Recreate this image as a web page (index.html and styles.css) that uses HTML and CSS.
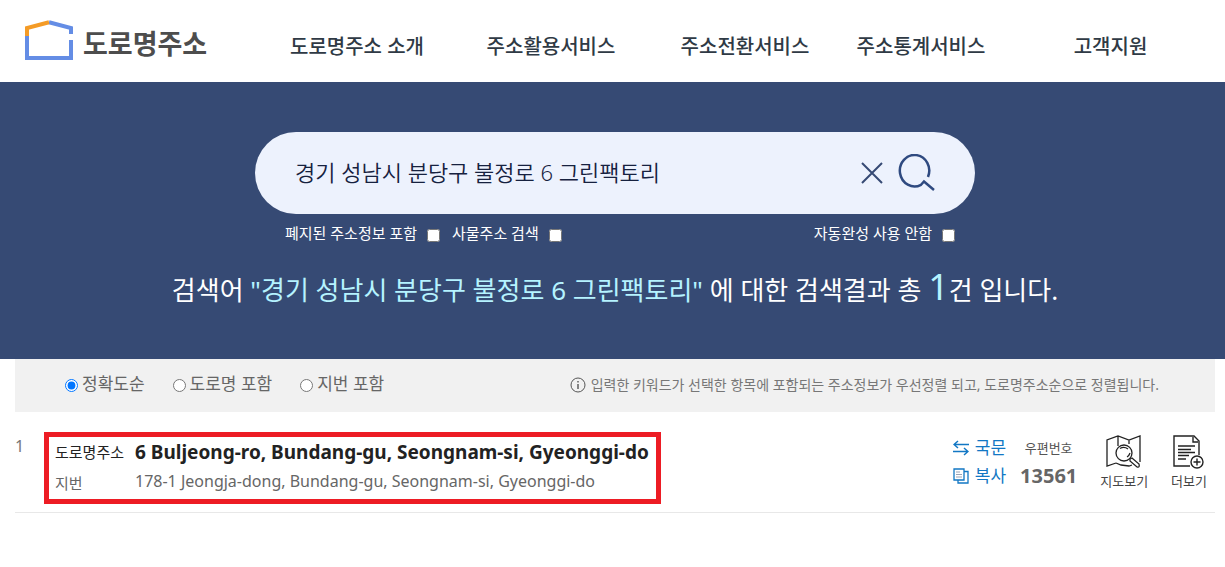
FILE: index.html
```html
<!DOCTYPE html>
<html lang="ko">
<head>
    <meta charset="UTF-8">
    <meta name="viewport" content="width=device-width, initial-scale=1.0">
    <title>도로명주소</title>
    <link rel="stylesheet" href="styles.css">
</head>
<body>

    <header class="header">
        <a class="logo" href="#">
            <svg width="48" height="42" viewBox="0 0 48 42" fill="none" stroke-width="4">
                <path d="M2 16V38H46V20" stroke="#648de5"/>
                <path d="M24 2.2L46 8V14" stroke="#648de5"/>
                <path d="M2 16V8L24 2.2" stroke="#f49b26"/>
            </svg>
            <span>도로명주소</span>
        </a>
        <nav class="menu">
            <a href="#">도로명주소 소개</a>
            <a href="#">주소활용서비스</a>
            <a href="#">주소전환서비스</a>
            <a href="#">주소통계서비스</a>
            <a href="#">고객지원</a>
        </nav>
    </header>

    <section class="search">
        <form class="search-form">
            <div class="search-box">
                <input type="text" class="keyword" aria-label="검색어" value="경기 성남시 분당구 불정로 6 그린팩토리">
                <button type="button" class="icon-btn" aria-label="지우기">
                    <svg width="22" height="22" viewBox="0 0 22 22" fill="none" stroke="#364a74" stroke-width="2">
                        <path d="M1 1L21 21M21 1L1 21"/>
                    </svg>
                </button>
                <button type="button" class="icon-btn" aria-label="검색">
                    <svg width="38" height="38" viewBox="0 0 38 38" fill="none" stroke="#2f4a80" stroke-width="2.5">
                        <path d="M31 23A14.7 15.7 0 1 0 24 30.8L27 27.500L37 36"/>
                    </svg>
                </button>
            </div>
            <div class="options">
                <label>폐지된 주소정보 포함 <input type="checkbox"></label>
                <label>사물주소 검색 <input type="checkbox"></label>
                <label class="auto">자동완성 사용 안함 <input type="checkbox"></label>
            </div>
        </form>
        <p class="summary">검색어 <span class="word">"경기 성남시 분당구 불정로 6 그린팩토리"</span> 에 대한 검색결과 총 <span class="count">1</span>건 입니다.</p>
    </section>

    <main class="content">
        <div class="sort">
            <label><input type="radio" name="sort" checked>정확도순</label>
            <label><input type="radio" name="sort">도로명 포함</label>
            <label><input type="radio" name="sort">지번 포함</label>
            <p class="notice">
                <svg width="16" height="16" viewBox="0 0 16 16" fill="none" stroke="#555">
                    <circle cx="8" cy="8" r="7"/>
                    <path d="M8 4V5.500M8 7V12" stroke-width="1.400"/>
                </svg>
                입력한 키워드가 선택한 항목에 포함되는 주소정보가 우선정렬 되고, 도로명주소순으로 정렬됩니다.
            </p>
        </div>

        <div class="result">
            <span class="num">1</span>
            <dl class="address">
                <dt>도로명주소</dt>
                <dd class="road">6 Buljeong-ro, Bundang-gu, Seongnam-si, Gyeonggi-do</dd>
                <dt class="sub">지번</dt>
                <dd class="sub jibun">178-1 Jeongja-dong, Bundang-gu, Seongnam-si, Gyeonggi-do</dd>
            </dl>
            <div class="links">
                <button type="button">
                    <svg width="16" height="16" viewBox="0 0 16 16" fill="none" stroke="#1277c4" stroke-width="1.500">
                        <path d="M16 4.500H1M5 1L1 4.500L5 8M0 11.500H15M11 8L15 11.500L11 15"/>
                    </svg>
                    국문
                </button>
                <button type="button">
                    <svg width="16" height="16" viewBox="0 0 16 16" fill="none" stroke="#1277c4" stroke-width="1.300">
                        <path d="M1 1H11V12H1ZM11 3.500H15V15H5V12"/>
                        <path d="M3 4H7M3 6.500H9M3 9H9" stroke="#9aa3b5" stroke-width="1"/>
                    </svg>
                    복사
                </button>
            </div>
            <div class="zip">
                <span>우편번호</span>
                <strong>13561</strong>
            </div>
            <button type="button" class="tool">
                <svg width="36" height="34" viewBox="0 0 36 34" fill="none" stroke="#222" stroke-width="1.300">
                    <path d="M10 28L1 31V5L12 1L23 5L34 1V27M23 5V9M12 1V11M10 28L15 30L23 31L26 30"/>
                    <circle cx="18" cy="18" r="8"/>
                    <path d="M14 13.500Q18 11 22 14M24 18Q23 21 21 22"/>
                    <path d="M24 24L26 23L33 29Q34 33 31 32L24 26Z"/>
                </svg>
                지도보기
            </button>
            <button type="button" class="tool">
                <svg width="32" height="34" viewBox="0 0 32 34" fill="none" stroke="#222" stroke-width="1.400">
                    <path d="M17 31H1V1H21L26 6V20M20 2V7H25"/>
                    <path d="M5 11H22M5 14.500H18M5 17.500H22M5 20.500H16M5 24H13"/>
                    <circle cx="24" cy="27" r="6"/>
                    <path d="M20.500 27H27.500M24 23.500V30.500"/>
                </svg>
                더보기
            </button>
        </div>
    </main>

</body>
</html>
```
FILE: styles.css
```css
* {
    box-sizing: border-box;
}
body {
    margin: 0;
    font-family: "Noto Sans", "Noto Sans CJK KR", sans-serif;
    background: #fff;
    color: #222;
}
p, dl, dd {
    margin: 0;
}
a {
    color: inherit;
    text-decoration: none;
}
button {
    padding: 0;
    border: none;
    background: none;
    font-family: inherit;
    cursor: pointer;
}
svg {
    flex-shrink: 0;
}
.header {
    display: flex;
    align-items: center;
    height: 82px;
}
.logo {
    display: flex;
    align-items: center;
    gap: 10px;
    width: 260px;
    padding-left: 25px;
    color: #4d4d4d;
    font-size: 27px;
    font-weight: bold;
    line-height: 40px;
}
.logo span {
    padding-top: 5px;
}
.menu {
    flex: 1;
    display: grid;
    grid-template-columns: 194fr 194fr 194fr 158fr 221fr;
    padding: 12px 4px 0 0;
    color: #2f3a45;
    font-size: 20px;
    font-weight: 500;
    line-height: 30px;
    text-align: center;
    white-space: nowrap;
}
.search {
    padding: 50px 5px 44px 10px;
    background: #364a74;
    color: #fff;
}
.search-form {
    max-width: 720px;
    margin: 0 auto;
}
.search-box {
    display: flex;
    align-items: center;
    gap: 14px;
    height: 82px;
    padding: 0 40px;
    border-radius: 41px;
    background: #edf2fd;
}
.keyword {
    flex: 1;
    min-width: 0;
    padding: 0 0 4px;
    border: none;
    outline: none;
    background: none;
    color: #16213f;
    font-family: inherit;
    font-size: 22px;
    font-weight: 350;
}
.icon-btn {
    display: flex;
}
.options {
    display: flex;
    gap: 12px;
    padding: 7px 20px 0 30px;
    font-size: 15px;
    line-height: 24px;
}
.options label {
    display: flex;
    align-items: center;
    gap: 10px;
}
.options input {
    margin: 4px 0 0;
}
.options .auto {
    margin-left: auto;
}
.summary {
    margin-top: 20px;
    font-size: 26px;
    line-height: 50px;
    text-align: center;
}
.word, .count {
    color: #b5f3ff;
}
.count {
    font-size: 36px;
    line-height: 40px;
}
.content {
    margin: 0 10px 0 15px;
}
.sort {
    display: flex;
    align-items: center;
    gap: 28px;
    height: 53px;
    padding: 0 50px 4px;
    background: #f1f1f1;
    color: #666;
    font-size: 17px;
    line-height: 24px;
    white-space: nowrap;
}
.sort label {
    display: flex;
    align-items: center;
    gap: 4px;
}
.sort input {
    margin: 4px 0 0;
}
.notice {
    display: flex;
    align-items: center;
    gap: 5px;
    margin: 2px 6px 0 auto;
    color: #777;
    font-size: 14px;
}
.result {
    display: flex;
    align-items: flex-start;
    padding: 20px 8px 8px 0;
    border-bottom: 1px solid #e8e8e8;
    white-space: nowrap;
}
.num {
    width: 29px;
    padding-top: 2px;
    color: #777;
    font-size: 16px;
    line-height: 24px;
}
.address {
    display: grid;
    grid-template-columns: 80px 1fr;
    row-gap: 3px;
    width: 617px;
    padding: 1px 6px 2px;
    border: 5px solid #ed1c24;
    font-size: 15px;
    line-height: 28px;
}
.address .road {
    font-size: 19px;
    font-weight: bold;
}
.address .sub {
    color: #666;
}
.address .jibun {
    font-size: 16px;
    line-height: 24px;
}
.links {
    display: flex;
    flex-direction: column;
    gap: 4px;
    margin: 4px 14px 0 auto;
}
.links button {
    display: flex;
    align-items: center;
    gap: 6px;
    color: #1277c4;
    font-size: 17px;
    line-height: 24px;
}
.zip {
    display: flex;
    flex-direction: column;
    align-items: center;
    gap: 4px;
    margin-top: 4px;
    color: #555;
    font-size: 13px;
    line-height: 24px;
}
.zip strong {
    color: #666;
    font-size: 20px;
}
.tool {
    display: flex;
    flex-direction: column;
    align-items: center;
    gap: 2px;
    margin: 3px 0 0 23px;
    color: #444;
    font-size: 13px;
    line-height: 20px;
}
```
